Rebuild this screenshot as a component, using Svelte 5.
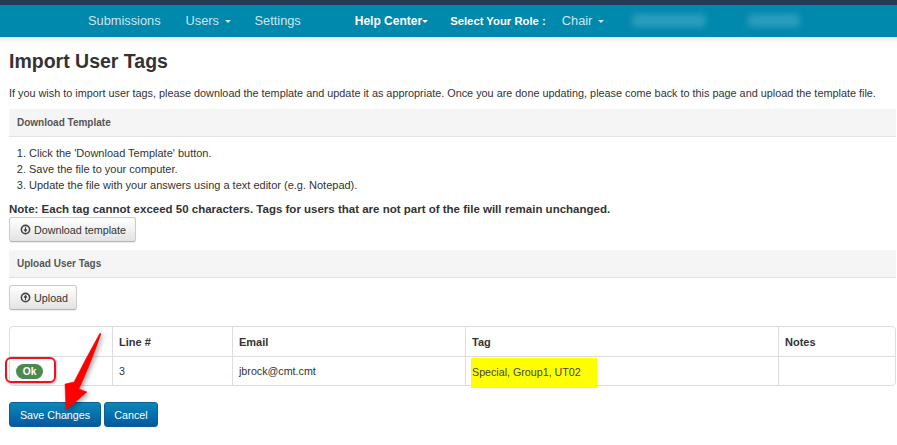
<script>
  const steps = ["Click the 'Download Template' button.", "Save the file to your computer.", "Update the file with your answers using a text editor (e.g. Notepad)."];
</script>

<div class="top"></div>
<nav>
  <a class="n sub" href="#a">Submissions</a>
  <a class="n users" href="#a">Users <i class="car"></i></a>
  <a class="n set" href="#a">Settings</a>
  <a class="n b help" href="#a">Help Center<i class="car tight"></i></a>
  <span class="n b role">Select Your Role :</span>
  <a class="n chair" href="#a">Chair <i class="car"></i></a>
  <span class="blur b1"></span>
  <span class="blur b2"></span>
</nav>
<div class="shadow"></div>

<main>
  <h1>Import User Tags</h1>
  <p class="intro">If you wish to import user tags, please download the template and update it as appropriate. Once you are done updating, please come back to this page and upload the template file.</p>
  <div class="section">Download Template</div>
  <ol>
    {#each steps as s}<li>{s}</li>{/each}
  </ol>
  <p class="note">Note: Each tag cannot exceed 50 characters. Tags for users that are not part of the file will remain unchanged.</p>
  <button class="btn dl">
    <svg viewBox="0 0 12 12" width="11" height="11"><circle cx="6" cy="6" r="4.5" fill="none" stroke="#444" stroke-width="1.7"/><path d="M6 3.2v4M4.4 5.8 6 8l1.6-2.2" fill="none" stroke="#444" stroke-width="1.2"/></svg>
    Download template
  </button>
  <div class="section s2">Upload User Tags</div>
  <button class="btn ul">
    <svg viewBox="0 0 12 12" width="11" height="11"><circle cx="6" cy="6" r="4.5" fill="none" stroke="#444" stroke-width="1.7"/><path d="M6 8.8v-4M4.4 6.2 6 4l1.6 2.2" fill="none" stroke="#444" stroke-width="1.2"/></svg>
    Upload
  </button>

  <div class="tablewrap">
    <table>
      <colgroup><col class="c1"/><col class="c2"/><col class="c3"/><col class="c4"/><col/></colgroup>
      <thead>
        <tr><th></th><th>Line #</th><th>Email</th><th>Tag</th><th>Notes</th></tr>
      </thead>
      <tbody>
        <tr>
          <td><span class="ok">Ok</span></td>
          <td>3</td>
          <td>jbrock@cmt.cmt</td>
          <td><span class="tag">Special, Group1, UT02</span></td>
          <td></td>
        </tr>
      </tbody>
    </table>
    <span class="redbox"></span>
  </div>

  <div class="actions">
    <button class="pri save">Save Changes</button>
    <button class="pri cancel">Cancel</button>
  </div>
</main>

<svg class="arrow" width="110" height="110" viewBox="0 0 110 110">
  <path d="M100 5 Q86 30 74 54 L65 56 L66 82 L87 64 L79 61 Q92 32 101 6 Z" fill="#ff0000" stroke="#ff0000" stroke-width=".5" stroke-linejoin="round"/>
</svg>

<style>
  :global(body) { margin: 0; background: #fff; font-family: "Liberation Sans", Arial, sans-serif; color: #333; overflow: hidden; }
  .top { height: 5px; background: #253a56; }
  nav { height: 32px; box-sizing: border-box; padding-bottom: 1px; background: #0088ad; position: relative; display: flex; align-items: center; font-size: 12.8px; }
  .shadow { height: 6px; background: linear-gradient(#e6e6e6, #fff); }
  .n { color: #cfe6ee; text-decoration: none; white-space: nowrap; }
  .b { color: #fff; font-weight: bold; font-size: 12px; }
  .sub { margin-left: 88px; }
  .users { margin-left: 25px; }
  .set { margin-left: 24px; }
  .help { margin-left: 54px; }
  .role { margin-left: 22px; font-size: 11.3px; }
  .chair { margin-left: 16px; }
  .car { display: inline-block; border-top: 3px solid currentColor; border-left: 3px solid transparent; border-right: 3px solid transparent; vertical-align: middle; margin-left: 2px; }
  .car.tight { margin-left: 0; color: #fff; }
  .blur { height: 13px; background: #2b9dbb; filter: blur(3px); border-radius: 4px; }
  .b1 { width: 74px; margin-left: 28px; }
  .b2 { width: 52px; margin-left: 42px; }

  main { padding: 0 1px 0 9px; margin-top: -1px; }
  h1 { font-size: 19.5px; line-height: 24px; margin: 0; padding-top: 7px; font-weight: bold; color: #333; }
  .intro { font-size: 10.85px; line-height: 14px; margin: 13px 0 0; color: #333; white-space: nowrap; }
  .section { background: #f5f5f5; border-bottom: 1px solid #e3e3e3; height: 27px; line-height: 27px; font-size: 10px; font-weight: bold; color: #555; padding-left: 8px; margin-top: 9px; }
  ol { margin: 8px 0 0; padding: 0 0 0 20px; font-size: 11px; line-height: 16px; color: #333; }
  .note { font-size: 11.5px; font-weight: bold; margin: 9px 0 0; line-height: 14px; color: #333; white-space: nowrap; }
  .btn { display: flex; align-items: center; gap: 3px; height: 25px; border: 1px solid #ccc; border-bottom-color: #b5b5b5; border-radius: 3px; background: linear-gradient(#fff, #e3e3e3); font: 10.75px "Liberation Sans", Arial, sans-serif; color: #333; padding: 0 6px 0 10px; white-space: nowrap; box-shadow: 0 1px 1px rgba(0,0,0,.08); }
  .dl { margin-top: 1px; width: 127px; }
  .s2 { margin-top: 8px; }
  .ul { margin-top: 7px; width: 68px; }
  .tablewrap { position: relative; margin-top: 16px; }
  table { width: 100%; border-collapse: separate; border-spacing: 0; border: 1px solid #ddd; border-radius: 4px; table-layout: fixed; font-size: 10.7px; color: #333; }
  col.c1 { width: 102px; }
  col.c2 { width: 120px; }
  col.c3 { width: 233px; }
  col.c4 { width: 313px; }
  th { height: 30px; text-align: left; font-size: 11px; padding: 0 6px; border-left: 1px solid #ddd; border-bottom: 1px solid #ddd; font-weight: bold; box-sizing: border-box; }
  td { height: 28px; padding: 0 6px; border-left: 1px solid #ddd; box-sizing: border-box; position: relative; }
  th:first-child, td:first-child { border-left: 0; }
  .ok { display: inline-block; width: 27px; height: 15px; line-height: 15px; border-radius: 8px; background: #4a8a4c; color: #fff; font-size: 10.2px; font-weight: bold; text-align: center; }
  .tag { position: absolute; left: 5px; top: 1px; width: 126px; height: 30px; line-height: 28px; background: #ffff00; color: #444; white-space: nowrap; padding-left: 1px; box-sizing: border-box; }
  .redbox { position: absolute; left: -4px; top: 31px; width: 47px; height: 22px; border: 2px solid #f01020; border-radius: 6px; box-shadow: 1px 1px 2px rgba(0,0,0,.25); }
  .actions { display: flex; gap: 3px; margin-top: 16px; }
  .pri { height: 25px; border: 1px solid #0a5f96; border-radius: 3px; background: linear-gradient(#0a88b8, #04599f); color: #fff; font: 10.7px "Liberation Sans", Arial, sans-serif; padding: 0; }
  .save { width: 92px; }
  .cancel { width: 54px; }
  .arrow { position: absolute; left: 0; top: 328px; pointer-events: none; filter: drop-shadow(2px 2px 2px rgba(0,0,0,.35)); }
</style>
